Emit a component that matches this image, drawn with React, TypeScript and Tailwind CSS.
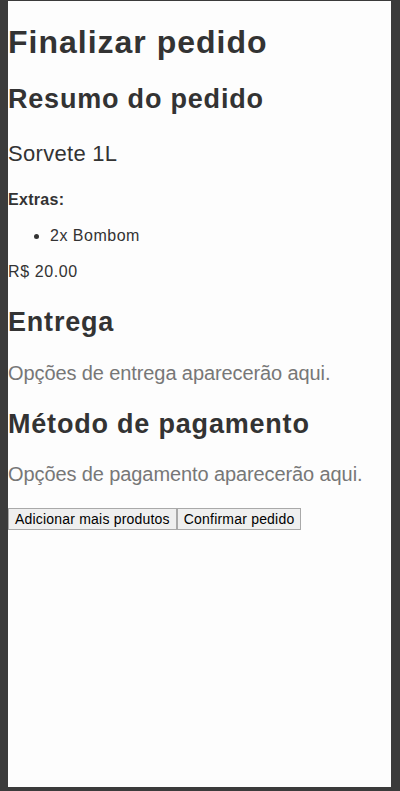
import React from "react";

export default function App() {
  return (
    <div className="min-h-[791px] w-[400px] bg-[#3b3b3b] pt-px pl-[8px] pr-[9px] pb-[4px] font-['Liberation_Sans',Arial,sans-serif] text-[#333]">
      <div className="flex min-h-[786px] flex-col bg-[#fdfdfd]">
        <h1 className="mt-[21px] text-[32px] font-bold leading-[40px] tracking-[1px]">Finalizar pedido</h1>
        <h2 className="mt-[22px] text-[27px] font-bold leading-[30px] tracking-[0.8px]">Resumo do pedido</h2>
        <h3 className="mt-[26px] text-[22px] leading-[28px] tracking-[0.3px]">Sorvete 1L</h3>
        <p className="mt-[22px] text-[16px] font-bold leading-[20px] tracking-[0.3px]">Extras:</p>
        <ul className="mt-[16px] list-disc pl-[42px] text-[16px] leading-[20px] tracking-[0.5px]">
          <li>2x Bombom</li>
        </ul>
        <p className="mt-[16px] text-[16px] leading-[20px] tracking-[0.6px]">R$ 20.00</p>
        <h2 className="mt-[25px] text-[27px] font-bold leading-[30px] tracking-[0.8px]">Entrega</h2>
        <p className="mt-[24px] text-[20px] leading-[24px] tracking-[-0.1px] text-[#777]">Opções de entrega aparecerão aqui.</p>
        <h2 className="mt-[24px] text-[27px] font-bold leading-[30px] tracking-[0.8px]">Método de pagamento</h2>
        <p className="mt-[23px] text-[20px] leading-[24px] tracking-[-0.1px] text-[#777]">Opções de pagamento aparecerão aqui.</p>
        <div className="mt-[22px] flex">
          <button className="h-[22px] border border-[#a9a9a9] bg-[#efefef] px-[6px] text-[14px] leading-[20px] tracking-[0.2px] text-black">Adicionar mais produtos</button>
          <button className="h-[22px] border border-[#a9a9a9] bg-[#efefef] px-[6px] text-[14px] leading-[20px] tracking-[0.2px] text-black">Confirmar pedido</button>
        </div>
      </div>
    </div>
  );
}
